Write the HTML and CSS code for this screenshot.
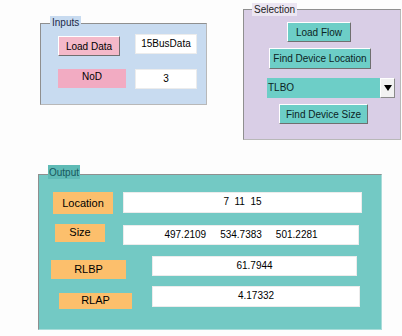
FILE: index.html
```html
<!DOCTYPE html>
<html lang="en">
<head>
    <meta charset="UTF-8">
    <meta name="viewport" content="width=device-width, initial-scale=1.0">
    <title>Device Placement</title>
    <link rel="stylesheet" href="styles.css">
</head>
<body>
    <div class="top">
        <!-- Inputs -->
        <div class="panel inputs">
            <span class="title title-inputs">Inputs</span>
            <div class="inputs-grid">
                <button class="btn btn-pink btn-load">Load Data</button>
                <div class="field">15BusData</div>
                <div class="tag-pink">NoD</div>
                <div class="field">3</div>
            </div>
        </div>

        <!-- Selection -->
        <div class="panel selection">
            <span class="title title-selection">Selection</span>
            <button class="btn btn-teal sel-flow">Load Flow</button>
            <button class="btn btn-teal sel-loc">Find Device Location</button>
            <div class="dropdown">
                <span class="dropdown-text">TLBO</span>
                <span class="dropdown-arrow">
                    <svg width="8" height="6" viewBox="0 0 8 6"><path d="M0 0 L8 0 L4 6 Z" fill="#000"/></svg>
                </span>
            </div>
            <button class="btn btn-teal sel-size">Find Device Size</button>
        </div>
    </div>

    <!-- Output -->
    <div class="panel output">
        <span class="title title-output">Output</span>

        <div class="out-row row-loc">
            <div class="tag-orange tag-loc">Location</div>
            <div class="field field-out field-loc">7 &nbsp;11 &nbsp;15</div>
        </div>

        <div class="out-row row-size">
            <div class="tag-orange tag-size">Size</div>
            <div class="field field-out field-size">
                <span>497.2109</span>
                <span>534.7383</span>
                <span>501.2281</span>
            </div>
        </div>

        <div class="out-row row-rlbp">
            <div class="tag-orange tag-rlbp">RLBP</div>
            <div class="field field-out field-rlbp">61.7944</div>
        </div>

        <div class="out-row row-rlap">
            <div class="tag-orange tag-rlap">RLAP</div>
            <div class="field field-out field-rlap">4.17332</div>
        </div>
    </div>
</body>
</html>
```

FILE: styles.css
```css
* {
    box-sizing: border-box;
}

body {
    margin: 0;
    background-color: #fdfdfd;
    font-family: "Liberation Sans", Arial, sans-serif;
    font-size: 10px;
    color: #000;
}

.top {
    display: flex;
    align-items: flex-start;
    padding-top: 9px;
}

/* panels ============================================ */
.panel {
    position: relative;
    border-top: 1px solid #8f8f8f;
    border-left: 1px solid #8f8f8f;
    border-right: 1px solid #b8b8b8;
    border-bottom: 1px solid #b8b8b8;
}

.title {
    position: absolute;
    top: -8px;
    left: 9px;
    padding: 0 2px;
    font-size: 10px;
    line-height: 13px;
}

.inputs {
    margin-left: 40px;
    margin-top: 14px;
    width: 167px;
    height: 82px;
    background-color: #c8dbf0;
}

.title-inputs {
    background-color: #c8dbf0;
    color: #1c2a4a;
}

.selection {
    margin-left: 36px;
    width: 158px;
    height: 131px;
    background-color: #d9cee6;
    display: flex;
    flex-direction: column;
    align-items: flex-start;
    padding-top: 12px;
}

.title-selection {
    left: 8px;
    top: -7px;
    background-color: #ece6f2;
    color: #222;
}

.output {
    margin-left: 38px;
    margin-top: 34px;
    width: 344px;
    height: 156px;
    background-color: #73c9c4;
    border-right-color: #a9dcd9;
    border-bottom-color: #a9dcd9;
    padding-top: 17px;
}

.title-output {
    top: -10px;
    left: 9px;
    padding: 1px 1px 0;
    background-color: #5fbbb6;
    color: #17575c;
}

/* controls ============================================ */
.btn {
    font-family: inherit;
    font-size: 10px;
    height: 20px;
    padding: 0;
    border: 1px solid;
    border-color: #fff #6f6f6f #6f6f6f #fff;
    color: #000;
}

.btn-pink {
    background-color: #f4b9c9;
}

.btn-teal {
    background-color: #6dcec7;
    color: #0c2424;
}

.field {
    background-color: #fff;
    border: 1px solid #ececec;
    text-align: center;
    height: 20px;
    line-height: 18px;
    font-size: 10px;
}

/* inputs ============================================ */
.inputs-grid {
    display: grid;
    grid-template-columns: 77px 62px;
    align-items: start;
    row-gap: 13px;
    padding: 10px 0 0 17px;
}

.btn-load {
    width: 62px;
    margin-top: 2px;
}

.tag-pink {
    width: 68px;
    height: 19px;
    background-color: #f2abc2;
    text-align: center;
    line-height: 14px;
    padding-top: 1px;
}

/* selection ============================================ */
.sel-flow {
    width: 64px;
    margin-left: 43px;
}

.sel-loc {
    width: 102px;
    height: 21px;
    margin-left: 25px;
    margin-top: 6px;
}

.dropdown {
    display: flex;
    width: 128px;
    height: 20px;
    margin-left: 23px;
    margin-top: 9px;
    background-color: #6dcec7;
}

.dropdown-text {
    flex: 1;
    line-height: 20px;
    padding-left: 1px;
    font-size: 10px;
    color: #0c2424;
}

.dropdown-arrow {
    width: 15px;
    display: flex;
    align-items: center;
    justify-content: center;
    background-color: #f2f2f2;
    border: 1px solid;
    border-color: #fff #8a8a8a #8a8a8a #fff;
}

.sel-size {
    width: 89px;
    margin-left: 35px;
    margin-top: 6px;
}

/* output ============================================ */
.out-row {
    display: flex;
    align-items: flex-start;
}

.tag-orange {
    background-color: #fcbf6c;
    font-size: 11px;
    text-align: center;
    line-height: 16px;
    padding-top: 2px;
}

.field-out {
    font-size: 10px;
}

.tag-loc {
    width: 60px;
    height: 22px;
    margin-left: 14px;
    padding-top: 3px;
}

.field-loc {
    width: 239px;
    height: 21px;
    margin-left: 10px;
}

.row-size {
    margin-top: 10px;
}

.tag-size {
    width: 50px;
    height: 18px;
    margin-left: 16px;
    padding-top: 0;
}

.field-size {
    width: 236px;
    margin-left: 18px;
    margin-top: 1px;
    display: flex;
    justify-content: center;
    gap: 14px;
}

.row-rlbp {
    margin-top: 11px;
}

.tag-rlbp {
    width: 75px;
    height: 19px;
    margin-left: 12px;
    margin-top: 4px;
    padding-top: 1px;
}

.field-rlbp {
    width: 205px;
    margin-left: 26px;
}

.row-rlap {
    margin-top: 7px;
}

.tag-rlap {
    width: 73px;
    height: 16px;
    margin-left: 20px;
    margin-top: 7px;
    padding-top: 0;
    line-height: 15px;
}

.field-rlap {
    width: 208px;
    height: 21px;
    margin-left: 20px;
}
```
